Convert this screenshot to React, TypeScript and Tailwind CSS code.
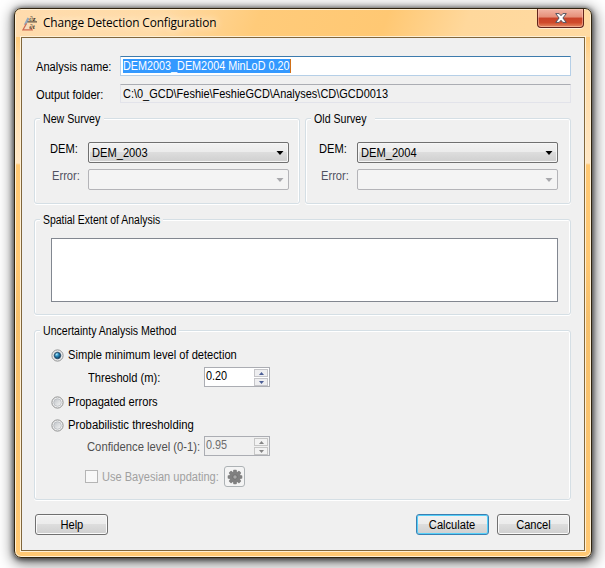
import React from "react";

function T({ children, className = "", scale = "scale-x-[0.89]", origin = "origin-left" }: { children: React.ReactNode; className?: string; scale?: string; origin?: string }) {
  return (
    <span className={`inline-block text-[12.5px] leading-[14px] whitespace-nowrap ${scale} ${origin} ${className}`}>
      {children}
    </span>
  );
}

function Group({ title, titleWidth, scale, className = "", children }: { title: string; titleWidth: string; scale: string; className?: string; children: React.ReactNode }) {
  return (
    <section
      className={`flex flex-col items-start rounded-[3px] border border-[#d5dfe5] shadow-[inset_1px_1px_0_#fff,inset_-1px_0_0_#fff,0_1px_0_#fff] ${className}`}
    >
      <h2 className={`-mt-[7px] ml-[5px] flex h-[15px] bg-[#f0f0f0] pl-[3px] ${titleWidth}`}>
        <T scale={scale}>{title}</T>
      </h2>
      {children}
    </section>
  );
}

function Combo({ value, disabled = false }: { value?: string; disabled?: boolean }) {
  return (
    <div
      className={`flex h-[21px] w-[201px] items-center justify-between rounded-[2px] border pr-1 pl-[3px] ${
        disabled
          ? "border-[#b4b4b8] bg-[#f4f4f4]"
          : "border-[#707070] bg-[linear-gradient(180deg,#f2f2f2_0%,#ebebeb_50%,#dddddd_50%,#cfcfcf_100%)] shadow-[inset_0_0_0_1px_#f6f6f6]"
      }`}
    >
      <T className="mt-px">{value}</T>
      <svg width="8" height="4" viewBox="0 0 8 4" className={disabled ? "text-[#a8a8ac]" : "text-black"}>
        <path d="M0.5 0h7L4 4z" fill="currentColor" />
      </svg>
    </div>
  );
}

function Survey({ title, value, pad, errorPad }: { title: string; value: string; pad: string; errorPad: string }) {
  return (
    <Group title={title} titleWidth="w-[64px]" scale="scale-x-[0.85]" className="h-[86px] w-[266px]">
      <div className={`mt-[15px] flex ${pad}`}>
        <T className="h-[14px] w-[38px]">DEM:</T>
        <Combo value={value} />
      </div>
      <div className={`mt-[6px] flex ${errorPad}`}>
        <T className="h-[14px] w-[36px] text-[#505060]">Error:</T>
        <Combo disabled />
      </div>
    </Group>
  );
}

function Radio({ label, checked = false, scale }: { label: string; checked?: boolean; scale?: string }) {
  return (
    <div className="flex h-[14px] items-center pl-[16px]">
      <svg width="13" height="13" viewBox="0 0 13 13">
        <defs>
          <radialGradient id="dot" cx="0.35" cy="0.3" r="0.8">
            <stop offset="0" stopColor="#b8f0ff" />
            <stop offset="0.4" stopColor="#2a8cc0" />
            <stop offset="1" stopColor="#0b3150" />
          </radialGradient>
          <linearGradient id="well" x1="0" y1="0" x2="1" y2="1">
            <stop offset="0" stopColor="#bfc3c7" />
            <stop offset="1" stopColor="#f6f6f6" />
          </linearGradient>
        </defs>
        <circle cx="6.5" cy="6.5" r="5.6" fill="#f4f4f4" stroke="#8e8f8f" />
        <circle cx="6.5" cy="6.5" r="3.8" fill="url(#well)" stroke="#b4b8bc" strokeWidth="0.8" />
        {checked && <circle cx="6.5" cy="6.5" r="3.1" fill="url(#dot)" stroke="#153c5c" strokeWidth="0.9" />}
      </svg>
      <T className="ml-1" scale={scale}>{label}</T>
    </div>
  );
}

function Arrow({ up = false, disabled = false }: { up?: boolean; disabled?: boolean }) {
  return (
    <div
      className={`flex h-[8px] w-[14px] items-center justify-center border ${
        disabled ? "border-[#c6c6c6] bg-[#f2f2f2] text-[#858585]" : "border-[#c5c5c9] bg-[#eeeef0] text-[#4c5f96]"
      }`}
    >
      <svg width="5" height="3" viewBox="0 0 5 3">
        <path d={up ? "M0 3h5L2.5 0z" : "M0 0h5L2.5 3z"} fill="currentColor" />
      </svg>
    </div>
  );
}

function Spinner({ value, disabled = false }: { value: string; disabled?: boolean }) {
  return (
    <div
      className={`flex h-[20px] w-[66px] justify-between border border-[#abadb3] pl-px ${
        disabled ? "bg-[#f0f0f0] text-[#6d6d6d]" : "bg-white"
      }`}
    >
      <T className="mt-px" scale="scale-x-[0.87]">{value}</T>
      <div className="mt-px mr-px flex flex-col gap-px">
        <Arrow up disabled={disabled} />
        <Arrow disabled={disabled} />
      </div>
    </div>
  );
}

function Button({ label, primary = false }: { label: string; primary?: boolean }) {
  return (
    <button
      className={`flex h-[21px] w-[73px] items-center justify-center rounded-[3px] border bg-[linear-gradient(180deg,#f2f2f2_0%,#ebebeb_50%,#dddddd_50%,#cfcfcf_100%)] ${
        primary ? "border-[#3c7fb1] shadow-[inset_0_0_0_1px_#55d0fa]" : "border-[#707070] shadow-[inset_0_0_0_1px_#fafafa]"
      }`}
    >
      <T origin="origin-center">{label}</T>
    </button>
  );
}

function Logo() {
  return (
    <svg width="16" height="18" viewBox="0 0 16 18">
      <path d="M6.5 4L3 11" stroke="#93a9bd" strokeWidth="2.4" />
      <path d="M4.5 9.5L1 15.8h9L8.5 13" fill="#f3dcc0" stroke="#cf6a50" strokeWidth="1.3" />
      <path d="M5.5 7.9h9.5" stroke="#3c342a" strokeWidth="1" />
      <text x="7.2" y="6.6" fontSize="7" fontWeight="bold" fontStyle="italic" fontFamily="Liberation Serif, serif" fill="#352e24">∂z</text>
      <text x="7.2" y="14.8" fontSize="7" fontWeight="bold" fontStyle="italic" fontFamily="Liberation Serif, serif" fill="#352e24">∂t</text>
    </svg>
  );
}

function Gear() {
  return (
    <svg width="16" height="16" viewBox="-8 -8 16 16" fill="#808080">
      {[0, 45, 90, 135].map((a) => (
        <rect key={a} x="-1.8" y="-7.3" width="3.6" height="14.6" rx="0.7" transform={`rotate(${a})`} />
      ))}
      <circle r="5.8" />
      <circle r="2.2" fill="#a8a8a8" stroke="#696969" strokeWidth="0.8" />
    </svg>
  );
}

export default function App() {
  return (
    <div className="h-[568px] w-[605px] overflow-hidden bg-white pt-[8px] pl-[14px] font-['Liberation_Sans',Arial,sans-serif] text-black">
      <div className="flex h-[550px] w-[578px] flex-col rounded-[7px] border border-[#30240f] bg-[linear-gradient(180deg,#ffcb7c_0px,#ffcb7c_28px,#ffd89e_50px,#ffe7c5_154px,#ffc873_156px,#ffc873_250px,#f6c06c_310px,#ffc873_540px)] px-[6px] shadow-[inset_0_0_0_1px_#fff0d5,0_1px_5px_1px_rgba(0,0,0,0.6),1px_3px_14px_3px_rgba(0,0,0,0.5)]">
        <header className="-mx-[5px] mt-px flex h-[27px] shrink-0 items-start justify-between rounded-t-[5px] bg-[linear-gradient(110deg,#ffdcae_0%,#ffdba6_25%,#ffcb7a_42%,#ffc873_64%,#ffd89c_78%,#ffdaa2_100%)] pl-[6px]">
          <div className="flex items-start">
            <div className="mt-[4px]"><Logo /></div>
            <h1 className="mt-[5px] ml-[5px] origin-left scale-x-[0.988] font-['Open_Sans','Noto_Sans',sans-serif] text-[12px] leading-[16px] tracking-[-0.12px] whitespace-nowrap [text-shadow:0_0_6px_#fff0d8,0_0_9px_#fff0d8]">
              Change Detection Configuration
            </h1>
          </div>
          <button className="-mt-px mr-[6px] flex h-[19px] w-[47px] items-center justify-center rounded-b-[4px] border border-t-0 border-[#63251c] bg-[linear-gradient(180deg,#f2b5a5_0%,#e58e78_45%,#c9432a_50%,#cf4a2b_75%,#e58a62_100%)] shadow-[inset_0_0_0_1px_rgba(255,205,185,0.5),0_1px_0_#fff0d5]">
            <svg width="12" height="10" viewBox="0 0 12 10">
              <path d="M0.7 0.6h3.5L6 2.7 7.8 0.6h3.5L7.9 5l3.4 4.4H7.8L6 7.3 4.2 9.4H0.7L4.1 5z" fill="#fff" stroke="#53535f" />
            </svg>
          </button>
        </header>

        <main className="flex h-[514px] w-[564px] shrink-0 flex-col border border-[#80663c] bg-[#f0f0f0] pl-[12px] shadow-[0_0_0_1px_#fff0d5]">
          <div className="mt-[18px] flex h-[20px] items-center">
            <T className="mt-[2px] ml-[2px] w-[84px]">Analysis name:</T>
            <div className="flex h-[20px] w-[451px] items-center border border-[#b5cfe7] border-t-[#3d7bad] bg-white pl-[2px]">
              <span className="flex h-[14px] w-[168px] border-r border-[#d07018] bg-[#3399ff] text-white">
                <T scale="scale-x-[0.865]">DEM2003_DEM2004 MinLoD 0.20</T>
              </span>
            </div>
          </div>
          <div className="mt-[8px] flex h-[19px] items-center">
            <T className="mt-[2px] ml-[2px] w-[84px]">Output folder:</T>
            <div className="flex h-[19px] w-[451px] items-center border border-[#e2e3ea] border-t-[#abadb3] pl-[2px]">
              <T scale="scale-x-[0.877]">C:\0_GCD\Feshie\FeshieGCD\Analyses\CD\GCD0013</T>
            </div>
          </div>

          <div className="mt-[15px] flex gap-[5px]">
            <Survey title="New Survey" value="DEM_2003" pad="pl-[15px]" errorPad="pl-[17px]" />
            <Survey title="Old Survey" value="DEM_2004" pad="pl-[13px]" errorPad="pl-[15px]" />
          </div>

          <Group title="Spatial Extent of Analysis" titleWidth="w-[123px]" scale="scale-x-[0.835]" className="mt-[15px] h-[96px] w-[537px]">
            <div className="mt-[10px] ml-[16px] h-[64px] w-[507px] border border-[#828790] bg-white" />
          </Group>

          <Group title="Uncertainty Analysis Method" titleWidth="w-[139px]" scale="scale-x-[0.845]" className="mt-[15px] h-[170px] w-[537px]">
            <div className="mt-[9px]"><Radio label="Simple minimum level of detection" checked /></div>
            <div className="mt-[5px] flex pl-[53px]">
              <T className="mt-[4px] w-[116px]">Threshold (m):</T>
              <Spinner value="0.20" />
            </div>
            <div className="mt-[8px]"><Radio label="Propagated errors" /></div>
            <div className="mt-[9px]"><Radio label="Probabilistic thresholding" scale="scale-x-[0.905]" /></div>
            <div className="mt-[4px] flex pl-[52px]">
              <T className="mt-[4px] w-[117px] text-[#505050]" scale="scale-x-[0.9]">Confidence level (0-1):</T>
              <Spinner value="0.95" disabled />
            </div>
            <div className="mt-[10px] flex items-center pl-[50px]">
              <div className="h-[13px] w-[13px] border border-[#b5b5b5] bg-[#f8f8f8]" />
              <T className="ml-[4px] w-[122px] text-[#a0a0a0]" scale="scale-x-[0.885]">Use Bayesian updating:</T>
              <div className="flex h-[21px] w-[21px] items-center justify-center rounded-[3px] border border-[#adb2b5] bg-[#f4f4f4]">
                <Gear />
              </div>
            </div>
          </Group>

          <footer className="mt-[14px] ml-px flex">
            <Button label="Help" />
            <div className="ml-[308px] flex gap-2">
              <Button label="Calculate" primary />
              <Button label="Cancel" />
            </div>
          </footer>
        </main>
      </div>
    </div>
  );
}
